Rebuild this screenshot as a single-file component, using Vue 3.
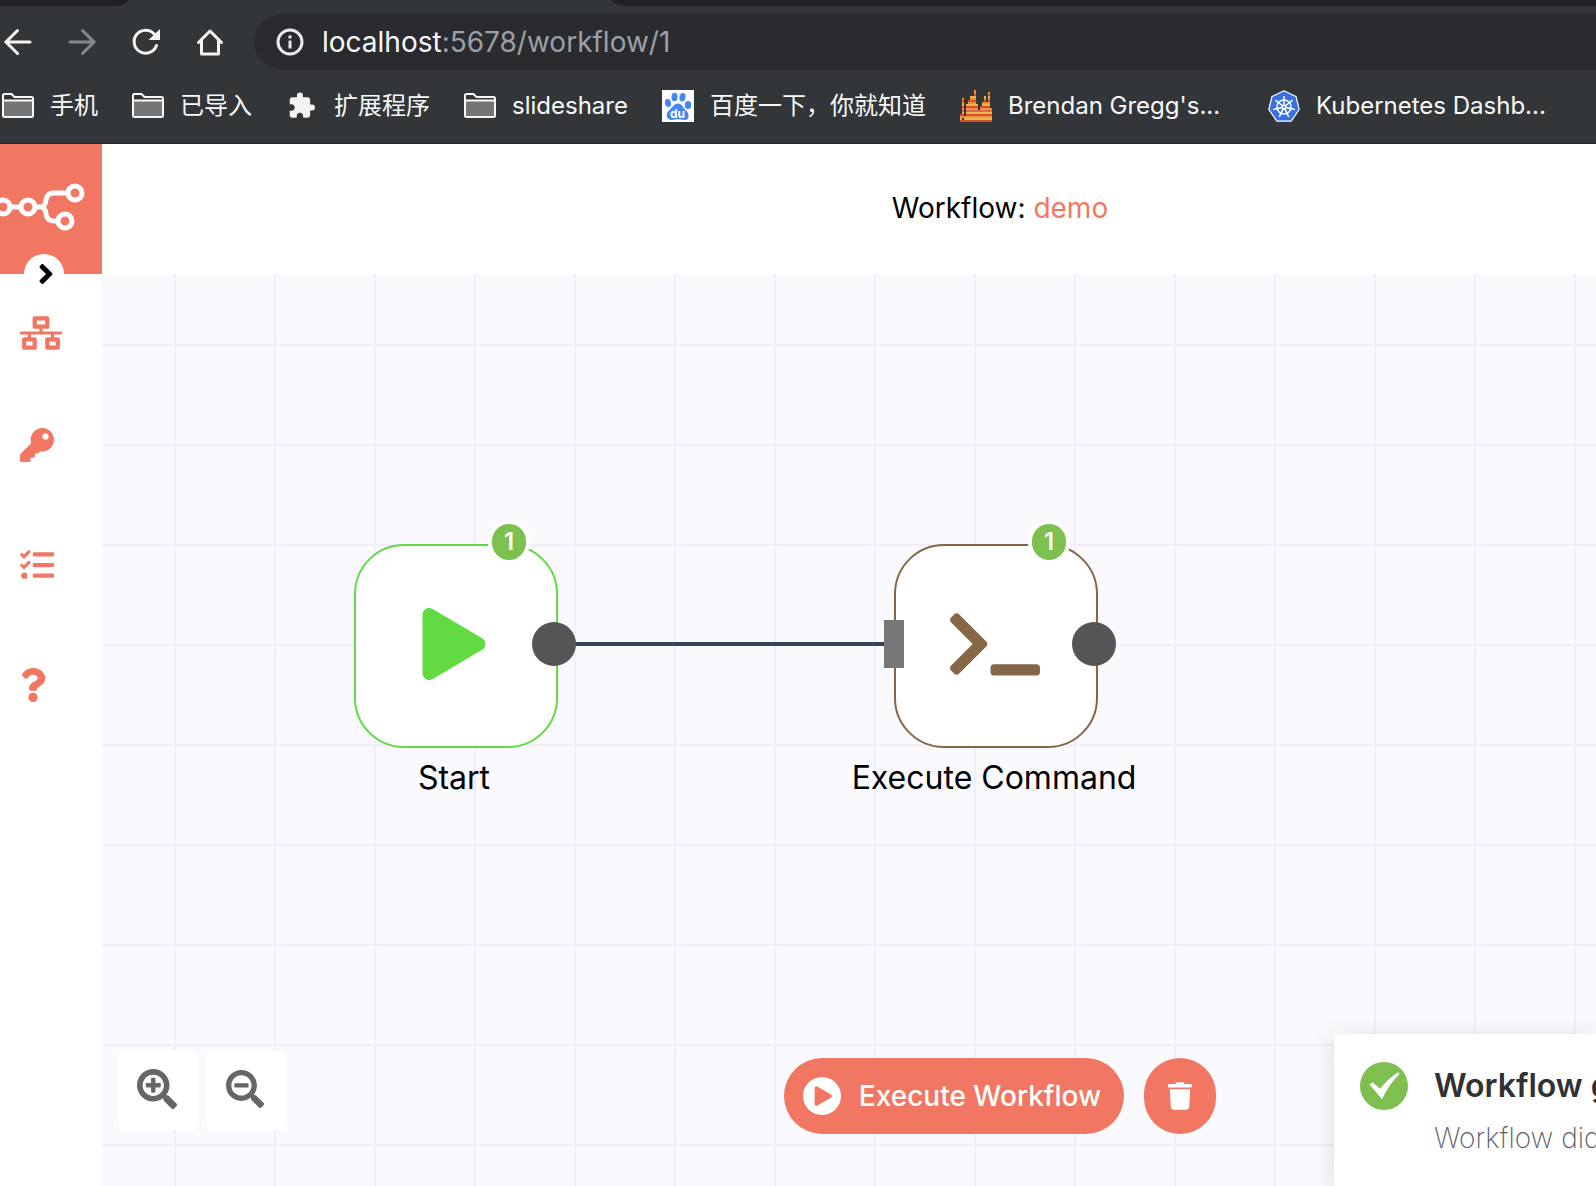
<script setup>
const bookmarks = [
  { icon: 'folder', label: '手机' },
  { icon: 'folder', label: '已导入' },
  { icon: 'puzzle', label: '扩展程序' },
  { icon: 'folder', label: 'slideshare' },
  { icon: 'baidu', label: '百度一下，你就知道' },
  { icon: 'flame', label: "Brendan Gregg's...", wide: true },
  { icon: 'kube', label: 'Kubernetes Dashb...', wide: true },
]

const flameRows = [
  [[7, 1]],
  [[7, 1], [14, 1]],
  [[7, 1], [14, 1]],
  [[5, 3], [12, 1], [14, 1]],
  [[1, 1], [5, 3], [12, 1], [14, 1]],
  [[1, 1], [4, 4], [12, 1], [14, 1]],
  [[1, 1], [4, 4], [11, 4]],
  [[1, 1], [3, 6], [11, 4]],
  [[1, 1], [3, 6], [10, 5]],
  [[1, 1], [3, 6], [10, 6]],
  [[1, 1], [3, 13]],
  [[1, 1], [3, 13]],
  [[0, 2], [3, 13]],
  [[0, 16]],
  [[0, 1], [2, 14]],
  [[0, 16]],
]
const flameColors = ['#e8923a', '#e8923a', '#e0482c', '#e8b23e', '#e8923a', '#e0482c', '#e8963c', '#e8b84a', '#e0482c', '#e8963c', '#eb5f50', '#e8b84a', '#e0482c', '#e8963c', '#e8b84a', '#e0482c']

const spokes = [0, 1, 2, 3, 4, 5, 6].map((i) => (i * 360) / 7)

const menu = [
  { name: 'Workflows', w: 42, box: '0 0 640 512', d: 'M640 264v-16c0-8.84-7.16-16-16-16H344v-40h72c17.67 0 32-14.33 32-32V32c0-17.67-14.33-32-32-32H224c-17.67 0-32 14.33-32 32v128c0 17.67 14.33 32 32 32h72v40H16c-8.84 0-16 7.16-16 16v16c0 8.84 7.16 16 16 16h104v40H64c-17.67 0-32 14.33-32 32v128c0 17.67 14.33 32 32 32h160c17.67 0 32-14.33 32-32V352c0-17.67-14.33-32-32-32h-56v-40h304v40h-56c-17.67 0-32 14.33-32 32v128c0 17.67 14.33 32 32 32h160c17.67 0 32-14.33 32-32V352c0-17.67-14.33-32-32-32h-56v-40h104c8.84 0 16-7.16 16-16zM256 128V64h128v64H256zm-64 320H96v-64h96v64zm352 0h-96v-64h96v64z' },
  { name: 'Credentials', w: 34, box: '0 0 512 512', d: 'M512 176.001C512 273.203 433.202 352 336 352c-11.22 0-22.19-1.062-32.827-3.069l-24.012 27.014A23.999 23.999 0 0 1 261.223 384H224v40c0 13.255-10.745 24-24 24h-40v40c0 13.255-10.745 24-24 24H24c-13.255 0-24-10.745-24-24v-78.059c0-6.365 2.529-12.47 7.029-16.971l161.802-161.802C163.108 213.814 160 195.271 160 176 160 78.798 238.797.001 335.999 0 433.488-.001 512 78.511 512 176.001zM336 128c0 26.51 21.49 48 48 48s48-21.49 48-48-21.49-48-48-48-48 21.49-48 48z' },
  { name: 'Executions', w: 34, box: '0 0 512 512', d: 'M139.61 35.5a12 12 0 0 0-17 0L58.93 98.81l-22.7-22.12a12 12 0 0 0-17 0L3.53 92.41a12 12 0 0 0 0 17l47.59 47.4a12.78 12.78 0 0 0 17.61 0l15.59-15.62L156.52 69a12.09 12.09 0 0 0 .09-17zm0 159.19a12 12 0 0 0-17 0l-63.68 63.72-22.7-22.1a12 12 0 0 0-17 0L3.53 252a12 12 0 0 0 0 17L51 316.5a12.77 12.77 0 0 0 17.6 0l15.7-15.69 72.2-72.22a12 12 0 0 0 .09-16.9zM64 368c-26.49 0-48.59 21.5-48.59 48S37.53 464 64 464a48 48 0 0 0 0-96zm432 16H208a16 16 0 0 0-16 16v32a16 16 0 0 0 16 16h288a16 16 0 0 0 16-16v-32a16 16 0 0 0-16-16zm0-320H208a16 16 0 0 0-16 16v32a16 16 0 0 0 16 16h288a16 16 0 0 0 16-16V80a16 16 0 0 0-16-16zm0 160H208a16 16 0 0 0-16 16v32a16 16 0 0 0 16 16h288a16 16 0 0 0 16-16v-32a16 16 0 0 0-16-16z' },
  { name: 'Help', w: 26, box: '0 0 384 512', d: 'M202.021 0C122.202 0 70.503 32.703 29.914 91.026c-7.363 10.58-5.093 25.086 5.178 32.874l43.138 32.709c10.373 7.865 25.132 6.026 33.253-4.148 25.049-31.381 43.63-49.449 82.757-49.449 30.764 0 68.816 19.799 68.816 49.631 0 22.552-18.617 34.134-48.993 51.164-35.423 19.86-82.299 44.576-82.299 106.405V320c0 13.255 10.745 24 24 24h72.471c13.255 0 24-10.745 24-24v-5.773c0-42.86 125.268-44.645 125.268-160.627C377.504 66.256 286.902 0 202.021 0zM192 373.459c-38.196 0-69.271 31.075-69.271 69.271 0 38.195 31.075 69.27 69.271 69.27s69.271-31.075 69.271-69.271-31.075-69.27-69.271-69.27z' },
]

const nodes = [
  { label: 'Start', kind: 'start', x: 252, y: 270, runs: 1, w: 64, box: '0 0 448 512', d: 'M424.4 214.7L72.4 6.6C43.8-10.3 0 6.1 0 47.9V464c0 37.5 40.7 60.1 72.4 41.3l352-208c31.4-18.5 31.5-64.1 0-82.6z' },
  { label: 'Execute Command', kind: 'command', x: 792, y: 270, runs: 1, input: true, w: 90, box: '0 0 640 512', d: 'M257.981 272.971L63.638 467.314c-9.373 9.373-24.569 9.373-33.941 0L7.029 444.647c-9.357-9.357-9.375-24.522-.04-33.901L161.011 256 6.99 101.255c-9.335-9.379-9.317-24.544.04-33.901l22.667-22.667c9.373-9.373 24.569-9.373 33.941 0L257.981 239.03c9.373 9.372 9.373 24.568 0 33.941zM640 456v-32c0-13.255-10.745-24-24-24H312c-13.255 0-24 10.745-24 24v32c0 13.255 10.745 24 24 24h304c13.255 0 24-10.745 24-24z' },
]
</script>

<template>
  <div class="page">
    <header class="browser">
      <div class="tabs">
        <span class="tab-left"></span>
        <span class="tab-right"></span>
      </div>
      <div class="toolbar">
        <button class="nav" aria-label="Back">
          <svg width="32" height="32" viewBox="0 0 32 32"><path d="M28 16H5M15.500 4.500L4 16l11.500 11.500" fill="none" stroke="#f1f3f4" stroke-width="3" stroke-linecap="round" /></svg>
        </button>
        <button class="nav" aria-label="Forward">
          <svg width="32" height="32" viewBox="0 0 32 32"><path d="M4 16h23M16.500 4.500L28 16L16.500 27.500" fill="none" stroke="#84888a" stroke-width="3" stroke-linecap="round" /></svg>
        </button>
        <button class="nav" aria-label="Reload">
          <svg width="32" height="32" viewBox="0 0 32 32"><path d="M26.500 19.500A11.500 11.500 0 1 1 24.200 8" fill="none" stroke="#f1f3f4" stroke-width="3" stroke-linecap="round" /><path d="M30 3v11H18.500z" fill="#f1f3f4" /></svg>
        </button>
        <button class="nav" aria-label="Home">
          <svg width="32" height="32" viewBox="0 0 32 32"><path d="M4.500 16.500L16 5l11.500 11.500M7.500 14.500V28h17V14.500" fill="none" stroke="#f1f3f4" stroke-width="3" stroke-linecap="round" stroke-linejoin="round" /></svg>
        </button>
        <div class="address">
          <svg width="28" height="28" viewBox="0 0 28 28"><circle cx="14" cy="14" r="12" fill="none" stroke="#e8eaed" stroke-width="3" /><path d="M12.500 12.500h3v8h-3zM12.500 7.500h3v3h-3z" fill="#e8eaed" /></svg>
          <p class="url"><span>localhost</span>:5678/workflow/1</p>
        </div>
      </div>
      <nav class="bookmarks" aria-label="Bookmarks">
        <a v-for="b in bookmarks" :key="b.label" href="#" class="bookmark">
          <svg v-if="b.icon === 'folder'" width="32" height="32" viewBox="0 0 32 32">
            <path d="M2 11h28v15H2z" fill="#727679" />
            <path d="M1 10.500h30M1 25.500V5.500Q1 4 2.500 4H9.500l3 3H29.500Q31 7 31 8.500v17Q31 27 29.500 27H2.500Q1 27 1 25.500z" fill="none" stroke="#f8f9fa" stroke-width="2" />
          </svg>
          <svg v-else-if="b.icon === 'puzzle'" width="32" height="32" viewBox="0 0 24 24">
            <path d="M20.500 11H19V7c0-1.100-.900-2-2-2h-4V3.500a2.500 2.500 0 0 0-5 0V5H4c-1.100 0-1.990.900-1.990 2v3.800H3.500c1.490 0 2.700 1.210 2.700 2.700s-1.210 2.700-2.700 2.700H2V20c0 1.100.900 2 2 2h3.800v-1.500c0-1.490 1.210-2.700 2.700-2.700 1.490 0 2.700 1.210 2.700 2.700V22H17c1.100 0 2-.900 2-2v-4h1.500a2.500 2.500 0 0 0 0-5z" transform="translate(1 1) scale(0.9)" fill="#f1f3f4" />
          </svg>
          <svg v-else-if="b.icon === 'baidu'" width="32" height="32" viewBox="0 0 32 32">
            <rect width="32" height="32" fill="#fff" />
            <g fill="#4285f4">
              <ellipse cx="6" cy="13" rx="3" ry="4" transform="rotate(-12 6 13)" />
              <ellipse cx="12.500" cy="7" rx="3" ry="4.300" />
              <ellipse cx="20.500" cy="7.200" rx="3" ry="4.300" transform="rotate(10 20.500 7.200)" />
              <ellipse cx="26" cy="15" rx="3.200" ry="4" />
              <path d="M16 13.500c4 0 5 4.500 8 7 3.500 3 4 9.500-1.500 9.500-3 0-4-.700-6.500-.700S12.500 30 10 30c-6 0-6.500-6.500-3-9.500 3-2.500 5-7 9-7z" />
            </g>
            <text x="15.500" y="28" text-anchor="middle" font-size="12" font-weight="700" fill="#fff">du</text>
          </svg>
          <svg v-else-if="b.icon === 'flame'" width="32" height="32" viewBox="0 0 16 16" shape-rendering="crispEdges">
            <template v-for="(row, y) in flameRows" :key="y">
              <rect v-for="seg in row" :key="seg[0]" :x="seg[0]" :y="y" :width="seg[1]" height="1" :fill="flameColors[y]" />
            </template>
          </svg>
          <svg v-else width="32" height="32" viewBox="0 0 32 32">
            <path d="M16 .800L28 6.500L31.200 19.500L23.200 31.200H8.800L.800 19.500L4 6.500z" fill="#3970e4" stroke="#fff" stroke-width="1.200" stroke-linejoin="round" />
            <g fill="none" stroke="#fff" stroke-width="1.500">
              <circle cx="16" cy="17" r="7" />
              <circle cx="16" cy="17" r="1.800" />
              <path v-for="a in spokes" :key="a" d="M16 15V6" :transform="`rotate(${a} 16 17)`" />
            </g>
          </svg>
          <span :class="{ wide: b.wide }">{{ b.label }}</span>
        </a>
      </nav>
    </header>

    <div class="app">
      <aside class="sidebar">
        <div class="logo">
          <svg width="102" height="130" viewBox="0 0 102 130" fill="none" stroke="#fff" stroke-width="5">
            <circle cx="3" cy="63" r="7" />
            <circle cx="28" cy="63" r="7" />
            <circle cx="75" cy="49" r="7" />
            <circle cx="65" cy="77" r="7" />
            <path d="M10 63h11M35 63h7M68 49H54q-7 0-8 7q-1 7-5 7q4 0 5 7q1 7 8 7h4" />
          </svg>
          <button class="toggle" aria-label="Expand menu">
            <svg width="16" height="32" viewBox="0 0 256 512"><path d="M224.300 273l-136 136c-9.400 9.400-24.600 9.400-33.900 0l-22.600-22.600c-9.400-9.400-9.400-24.600 0-33.900l96.400-96.400-96.400-96.400c-9.400-9.400-9.400-24.600 0-33.900L54.300 103c9.400-9.400 24.600-9.400 33.900 0l136 136c9.500 9.400 9.500 24.600.100 34z" fill="#000" /></svg>
          </button>
        </div>
        <nav class="menu" aria-label="Main menu">
          <a v-for="m in menu" :key="m.name" href="#" :aria-label="m.name">
            <svg :width="m.w" height="34" :viewBox="m.box"><path :d="m.d" fill="currentColor" /></svg>
          </a>
        </nav>
      </aside>

      <div class="content">
        <div class="title-bar">
          <h1>Workflow: <a href="#">demo</a></h1>
        </div>
        <main class="canvas">
          <div class="wire"></div>
          <div v-for="n in nodes" :key="n.label" class="node" :class="n.kind" :style="{ left: n.x + 'px', top: n.y + 'px' }">
            <div class="box">
              <svg :width="n.w" height="72" :viewBox="n.box"><path :d="n.d" fill="currentColor" /></svg>
              <span class="badge"><span>{{ n.runs }}</span></span>
              <span v-if="n.input" class="port-in"></span>
              <span class="port-out"></span>
            </div>
            <p class="label">{{ n.label }}</p>
          </div>

          <div class="zoom">
            <button aria-label="Zoom in">
              <svg width="40" height="40" viewBox="0 0 512 512"><path d="M304 192v32c0 6.600-5.400 12-12 12h-56v56c0 6.600-5.400 12-12 12h-32c-6.600 0-12-5.400-12-12v-56h-56c-6.600 0-12-5.400-12-12v-32c0-6.600 5.400-12 12-12h56v-56c0-6.600 5.400-12 12-12h32c6.600 0 12 5.400 12 12v56h56c6.600 0 12 5.400 12 12zm201 284.700L476.700 505c-9.400 9.400-24.600 9.400-33.900 0L343 405.300c-4.500-4.500-7-10.600-7-17V372c-35.300 27.600-79.700 44-128 44C93.100 416 0 322.900 0 208S93.100 0 208 0s208 93.100 208 208c0 48.300-16.400 92.700-44 128h16.300c6.400 0 12.500 2.500 17 7l99.700 99.700c9.300 9.400 9.300 24.600 0 34zM344 208c0-75.200-60.800-136-136-136S72 132.800 72 208s60.800 136 136 136 136-60.800 136-136z" fill="currentColor" /></svg>
            </button>
            <button aria-label="Zoom out">
              <svg width="38" height="38" viewBox="0 0 512 512"><path d="M304 192v32c0 6.600-5.400 12-12 12H124c-6.600 0-12-5.400-12-12v-32c0-6.600 5.400-12 12-12h168c6.600 0 12 5.400 12 12zm201 284.700L476.700 505c-9.400 9.400-24.600 9.400-33.900 0L343 405.300c-4.500-4.500-7-10.600-7-17V372c-35.300 27.600-79.700 44-128 44C93.100 416 0 322.900 0 208S93.100 0 208 0s208 93.100 208 208c0 48.300-16.400 92.700-44 128h16.300c6.400 0 12.500 2.500 17 7l99.700 99.700c9.300 9.400 9.300 24.600 0 34zM344 208c0-75.200-60.800-136-136-136S72 132.800 72 208s60.800 136 136 136 136-60.800 136-136z" fill="currentColor" /></svg>
            </button>
          </div>

          <div class="actions">
            <button class="run">
              <svg width="38" height="38" viewBox="8 8 496 496"><path d="M256 8C119 8 8 119 8 256s111 248 248 248 248-111 248-248S393 8 256 8zm115.700 272l-176 101c-15.800 8.800-35.700-2.500-35.700-21V152c0-18.400 19.800-29.800 35.700-21l176 107c16.400 9.200 16.400 32.900 0 42z" fill="currentColor" /></svg>
              Execute Workflow
            </button>
            <button class="clear" aria-label="Clear execution data">
              <svg width="24" height="28" viewBox="0 0 448 512"><path d="M432 32H312l-9.400-18.700A24 24 0 0 0 281.100 0H166.800a23.720 23.720 0 0 0-21.400 13.300L136 32H16A16 16 0 0 0 0 48v32a16 16 0 0 0 16 16h416a16 16 0 0 0 16-16V48a16 16 0 0 0-16-16zM53.200 467a48 48 0 0 0 47.900 45h245.800a48 48 0 0 0 47.900-45L416 128H32z" fill="currentColor" /></svg>
            </button>
          </div>

          <section class="toast" role="alert">
            <svg width="48" height="48" viewBox="0 0 48 48"><circle cx="24" cy="24" r="24" fill="#7ec050" /><path d="M9.500 22.500l3.200-2.200 7.300 6.500Q29 15.500 38.500 10.300l.900 1.700Q28.500 23 22 37.300z" fill="#fff" /></svg>
            <div class="message">
              <h2>Workflow g</h2>
              <p>Workflow did</p>
            </div>
          </section>
        </main>
      </div>
    </div>
  </div>
</template>

<style>
body {
  margin: 0;
}
</style>

<style scoped>
* {
  box-sizing: border-box;
}

.page {
  display: flex;
  flex-direction: column;
  min-height: 100vh;
  overflow: hidden;
  font-family: Inter, "Noto Sans CJK SC", sans-serif;
  color: #000;
}

svg {
  flex: none;
  display: block;
}

h1,
h2,
p {
  margin: 0;
  white-space: nowrap;
}

a {
  color: inherit;
  text-decoration: none;
}

button {
  display: flex;
  align-items: center;
  justify-content: center;
  padding: 0;
  border: 0;
  background: none;
  font: inherit;
  color: inherit;
}

.browser {
  height: 144px;
  flex: none;
  background: #323639;
  border-bottom: 1px solid #26282b;
}

.tabs {
  display: flex;
  height: 6px;
}

.tab-left {
  width: 128px;
  background: #202124;
  border-bottom-right-radius: 14px 6px;
}

.tab-right {
  flex: 1;
  margin-left: 484px;
  background: #202124;
  border-bottom-left-radius: 14px 6px;
}

.toolbar {
  display: flex;
  align-items: center;
  gap: 32px;
  padding: 8px 0 0 2px;
}

.address {
  display: flex;
  flex: 1;
  align-items: center;
  gap: 18px;
  height: 56px;
  margin-left: -4px;
  padding-left: 22px;
  border-radius: 28px 0 0 28px;
  background: #2a2b2e;
}

.url {
  font-size: 28px;
  color: #9aa0a6;
}

.url span {
  color: #f8f9fa;
}

.bookmarks {
  display: flex;
  gap: 34px;
  padding: 20px 0 0 2px;
  font-size: 24px;
  line-height: 32px;
  color: #f8f9fa;
}

.bookmark {
  display: flex;
  flex: none;
  gap: 16px;
  white-space: nowrap;
}

.wide {
  width: 226px;
}

.app {
  display: flex;
  flex: 1;
}

.sidebar {
  flex: none;
  width: 102px;
  background: #fff;
}

.logo {
  position: relative;
  height: 130px;
  background: #f17762;
}

.toggle {
  position: absolute;
  left: 24px;
  bottom: -20px;
  width: 40px;
  height: 40px;
  padding-left: 4px;
  border-radius: 50%;
  background: #fff;
}

.menu {
  display: flex;
  flex-direction: column;
  padding-top: 7px;
  color: #f17762;
}

.menu a {
  display: flex;
  align-items: center;
  height: 120px;
  padding-left: 20px;
}

.menu a:first-child {
  height: 104px;
}

.content {
  display: flex;
  flex: 1;
  flex-direction: column;
  min-width: 0;
}

.title-bar {
  display: flex;
  align-items: center;
  justify-content: center;
  height: 130px;
  padding: 0 0 2px 302px;
}

h1 {
  font-size: 28px;
  font-weight: 400;
}

h1 a {
  color: #f17762;
}

.canvas {
  position: relative;
  flex: 1;
  min-height: 912px;
  overflow: hidden;
  background-color: #faf9fe;
  background-image:
    linear-gradient(#eeeefc 2px, transparent 2px),
    linear-gradient(90deg, #eeeefc 2px, transparent 2px);
  background-size: 100px 100px;
  background-position: 72px 70px;
}

.wire {
  position: absolute;
  left: 470px;
  top: 368px;
  width: 320px;
  height: 4px;
  background: #354355;
}

.node {
  position: absolute;
  display: flex;
  flex-direction: column;
  align-items: center;
  width: 204px;
}

.start {
  color: #62db42;
}

.command {
  color: #856748;
}

.box {
  position: relative;
  display: flex;
  align-items: center;
  justify-content: center;
  width: 204px;
  height: 204px;
  padding: 0 4px 4px 0;
  border: 2px solid currentColor;
  border-radius: 50px;
  background: #fff;
}

.command .box {
  padding-right: 2px;
}

.badge {
  position: absolute;
  top: -26px;
  right: 26px;
  padding: 4px;
  border-radius: 22px;
  background: #fff;
}

.badge span {
  display: block;
  width: 34px;
  height: 36px;
  border-radius: 17px;
  background: #7ec050;
  color: #fff;
  font-size: 24px;
  font-weight: 600;
  line-height: 36px;
  text-align: center;
}

.port-in {
  position: absolute;
  left: -12px;
  top: 74px;
  width: 20px;
  height: 48px;
  background: #777;
}

.port-out {
  position: absolute;
  right: -20px;
  top: 76px;
  width: 44px;
  height: 44px;
  border-radius: 50%;
  background: #555;
}

.label {
  padding-right: 4px;
  color: #000;
  font-size: 32px;
  line-height: 60px;
}

.zoom {
  position: absolute;
  left: 16px;
  bottom: 56px;
  display: flex;
  gap: 8px;
  color: #666;
}

.zoom button {
  width: 80px;
  height: 80px;
  padding: 0 2px 2px 0;
  border-radius: 6px;
  background: #fff;
}

.actions {
  position: absolute;
  left: 302px;
  right: 0;
  bottom: 52px;
  display: flex;
  justify-content: center;
  gap: 20px;
  pointer-events: none;
}

.run,
.clear {
  height: 76px;
  border-radius: 38px;
  background: #f17762;
  color: #fff;
  pointer-events: auto;
}

.run {
  width: 340px;
  gap: 18px;
  padding-right: 4px;
  font-size: 28px;
  font-weight: 500;
  white-space: nowrap;
}

.clear {
  width: 72px;
}

.toast {
  position: absolute;
  right: 0;
  bottom: 0;
  display: flex;
  gap: 26px;
  width: 262px;
  height: 152px;
  padding: 28px 0 0 26px;
  overflow: hidden;
  background: #fff;
  box-shadow: 0 4px 24px rgba(0, 0, 0, 0.12);
}

.message {
  padding-top: 2px;
}

h2 {
  color: #303133;
  font-size: 32px;
  font-weight: 600;
  line-height: 44px;
}

.message p {
  margin-top: 8px;
  color: #606266;
  font-size: 28px;
  font-weight: 200;
  line-height: 44px;
}
</style>
